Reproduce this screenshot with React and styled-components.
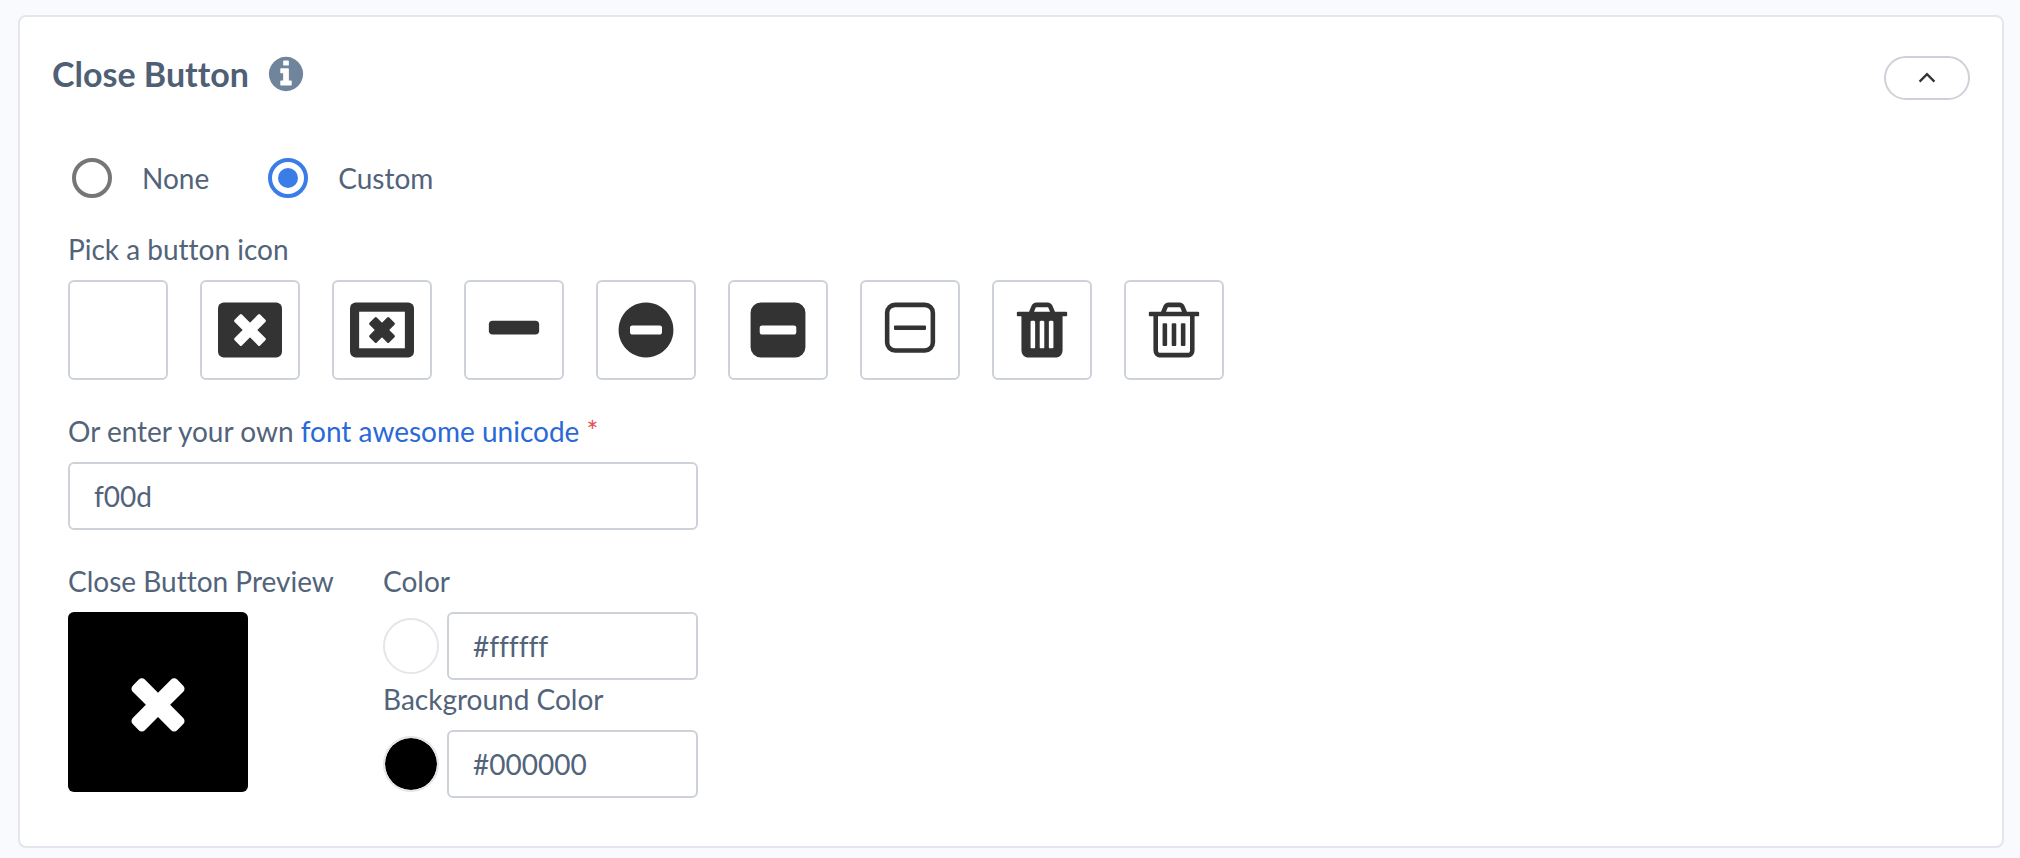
import { useState } from 'react';
import styled, { createGlobalStyle } from 'styled-components';

const GlobalStyle = createGlobalStyle`
	* {
		box-sizing: border-box;
	}
	body {
		margin: 0;
		background: #f8fafe;
		color: #52637a;
		font-family: Lato, 'Liberation Sans', sans-serif;
		font-size: 28px;
		line-height: 38px;
		font-variant-ligatures: none;
	}
`;

const Card = styled.section`
	margin: 15px 16px 10px 18px;
	padding: 39px 32px 48px 32px;
	background: #fff;
	border: 2px solid #e3e6ec;
	border-radius: 8px;
`;

const Header = styled.header`
	display: flex;
	justify-content: space-between;
	align-items: flex-start;
`;

const Heading = styled.div`
	display: flex;
	align-items: center;
	gap: 20px;
`;

const Title = styled.h2`
	margin: 0;
	color: #4f6075;
	font-size: 34px;
	line-height: 36px;
	font-weight: 700;
`;

const IconButton = styled.button`
	display: flex;
	align-items: center;
	justify-content: center;
	padding: 0;
	border: 2px solid #cdd2da;
	background: #fff;
	color: #333;
	cursor: pointer;
`;

const InfoButton = styled(IconButton)`
	width: 34px;
	height: 34px;
	border: none;
	color: #70859b;
`;

const CollapseButton = styled(IconButton)`
	width: 86px;
	height: 44px;
	border-radius: 22px;
`;

const Body = styled.div`
	display: flex;
	flex-direction: column;
	gap: 32px;
	padding: 58px 16px 0;
`;

const Options = styled.div`
	display: flex;
	gap: 59px;
	padding-left: 4px;
`;

const Option = styled.label`
	display: flex;
	align-items: center;
	gap: 30px;
	height: 40px;
`;

const Radio = styled.input`
	appearance: none;
	display: grid;
	place-items: center;
	width: 40px;
	height: 40px;
	margin: 0;
	border: 4px solid #767676;
	border-radius: 50%;

	&:checked {
		border-color: #3a7de8;
	}
	&:checked::before {
		content: '';
		width: 20px;
		height: 20px;
		border-radius: 50%;
		background: #3a7de8;
	}
`;

const Field = styled.div`
	max-width: ${({ $wide }) => ($wide ? 'none' : '630px')};
`;

const Label = styled.label`
	display: block;
	margin-bottom: 12px;
	white-space: nowrap;
`;

const IconRow = styled.div`
	display: flex;
	flex-wrap: wrap;
	gap: 32px;
`;

const IconChoice = styled(IconButton)`
	width: 100px;
	height: 100px;
	border-radius: 6px;
	color: ${({ $active }) => ($active ? '#fff' : '#333')};
`;

const Link = styled.a`
	color: #2a69d8;
	text-decoration: none;
`;

const Required = styled.span`
	color: #e0524d;
`;

const TextInput = styled.input`
	width: 100%;
	min-width: 0;
	height: 68px;
	padding: 0 24px;
	border: 2px solid #cdd2da;
	border-radius: 6px;
	background: #fff;
	color: inherit;
	font: inherit;
	font-variant-ligatures: none;
`;

const Columns = styled.div`
	display: grid;
	grid-template-columns: 1fr 1fr;
	max-width: 630px;
`;

const Preview = styled.div`
	display: flex;
	align-items: center;
	justify-content: center;
	width: 180px;
	height: 180px;
	border-radius: 6px;
	background: ${({ $background }) => $background};
	color: ${({ $color }) => $color};
`;

const ColorRow = styled.div`
	display: flex;
	align-items: center;
	gap: 8px;
`;

const Swatch = styled.input`
	appearance: none;
	flex: none;
	width: 56px;
	height: 56px;
	padding: 0;
	border: 2px solid #e5e5ea;
	border-radius: 50%;
	background: none;
	overflow: hidden;

	&::-webkit-color-swatch-wrapper {
		padding: 0;
	}
	&::-webkit-color-swatch {
		border: none;
		border-radius: 50%;
	}
`;

const Svg = styled.svg`
	display: block;
	flex: none;
	fill: currentColor;
`;

const circle =
	'm320-64q0 209-103 385.5t-279.5 279.5-385.5 103-385.5-103-279.5-279.5-103-385.5 103-385.5 279.5-279.5 385.5-103 385.5 103 279.5 279.5 103 385.5z';
const trashLid =
	'h448l-48-117q-7-9-17-11h-317q-10 2-17 11zm928 32v64q0 14-9 23t-23 9h-96v948q0 83-47 143.5t-113 60.5h-832q-66 0-113-58.5t-47-141.5v-952h-96q-14 0-23-9t-9-23v-64q0-14 9-23t23-9h309l70-167q15-37 54-63t79-26h320q40 0 79 26t54 63l70 167h309q14 0 23 9t9 23z';
const slot = 'v576q0 14-9 23t-23 9h-64q-14 0-23-9t-9-23v-576q0-14 9-23t23-9h64q14 0 23 9t9 23z';
const longSlot = 'v-704q0-14-9-23t-23-9h-64q-14 0-23 9t-9 23v704q0 14 9 23t23 9h64q14 0 23-9t9-23z';

const paths = {
	times:
		'M1490 1322q0 40-28 68l-136 136q-28 28-68 28t-68-28l-294-294-294 294q-28 28-68 28t-68-28l-136-136q-28-28-28-68t28-68l294-294-294-294q-28-28-28-68t28-68l136-136q28-28 68-28t68 28l294 294 294-294q28-28 68-28t68 28l136 136q28 28 28 68t-28 68l-294 294 294 294q28 28 28 68z',
	minus:
		'M1600 736v192q0 40-28 68t-68 28h-1216q-40 0-68-28t-28-68v-192q0-40 28-68t68-28h1216q40 0 68 28t28 68z',
	minusCircle: `M1344 960v-128q0-26-19-45t-45-19h-768q-26 0-45 19t-19 45v128q0 26 19 45t45 19h768q26 0 45-19t19-45z${circle}`,
	minusSquare:
		'M1408 960v-128q0-26-19-45t-45-19h-896q-26 0-45 19t-19 45v128q0 26 19 45t45 19h896q26 0 45-19t19-45zm256-544v960q0 119-84.5 203.5t-203.5 84.5h-960q-119 0-203.5-84.5t-84.5-203.5v-960q0-119 84.5-203.5t203.5-84.5h960q119 0 203.5 84.5t84.5 203.5z',
	minusSquareOutline:
		'M1344 800v64q0 14-9 23t-23 9h-832q-14 0-23-9t-9-23v-64q0-14 9-23t23-9h832q14 0 23 9t9 23zm128 448v-832q0-66-47-113t-113-47h-832q-66 0-113 47t-47 113v832q0 66 47 113t113 47h832q66 0 113-47t47-113zm128-832v832q0 119-84.5 203.5t-203.5 84.5h-832q-119 0-203.5-84.5t-84.5-203.5v-832q0-119 84.5-203.5t203.5-84.5h832q119 0 203.5 84.5t84.5 203.5z',
	trash: `M704 1376${longSlot}m256 0${longSlot}m256 0${longSlot}m-544-992${trashLid}`,
	trashOutline: `M704 736${slot}m256 0${slot}m256 0${slot}m128 724v-948h-896v948q0 22 7 40.5t14.5 27 10.5 8.5h832q3 0 10.5-8.5t14.5-27 7-40.5zm-672-1076${trashLid}`,
	info: 'M1152 1376v-160q0-14-9-23t-23-9h-96v-512q0-14-9-23t-23-9h-320q-14 0-23 9t-9 23v160q0 14 9 23t23 9h96v320h-96q-14 0-23 9t-9 23v160q0 14 9 23t23 9h448q14 0 23-9t9-23zm-128-896v-160q0-14-9-23t-23-9h-192q-14 0-23 9t-9 23v160q0 14 9 23t23 9h192q14 0 23-9t9-23zm640 416q0 209-103 385.5t-279.5 279.5-385.5 103-385.5-103-279.5-279.5-103-385.5 103-385.5 279.5-279.5 385.5-103 385.5 103 279.5 279.5 103 385.5z',
};

function Cross({ length, fill }) {
	const bar = { x: 896 - length / 2, y: 752, width: length, height: 288, rx: 40, fill };
	return (
		<>
			<rect {...bar} transform="rotate(45 896 896)" />
			<rect {...bar} transform="rotate(-45 896 896)" />
		</>
	);
}

function Icon({ name, size = 64 }) {
	return (
		<Svg width={size} height={size} viewBox="0 0 1792 1792" aria-hidden="true">
			{name === 'windowClose' && (
				<>
					<rect y="128" width="1792" height="1536" rx="160" />
					<Cross length={1010} fill="#fff" />
				</>
			)}
			{name === 'windowCloseOutline' && (
				<>
					<rect y="128" width="1792" height="1536" rx="160" />
					<rect x="256" y="384" width="1280" height="1024" fill="#fff" />
					<Cross length={780} />
				</>
			)}
			{paths[name] && <path d={paths[name]} />}
		</Svg>
	);
}

const choices = [
	{ name: 'times', code: 'f00d' },
	{ name: 'windowClose', code: 'f2d3' },
	{ name: 'windowCloseOutline', code: 'f2d4' },
	{ name: 'minus', code: 'f068' },
	{ name: 'minusCircle', code: 'f056' },
	{ name: 'minusSquare', code: 'f146' },
	{ name: 'minusSquareOutline', code: 'f147' },
	{ name: 'trash', code: 'f1f8' },
	{ name: 'trashOutline', code: 'f014' },
];

export default function App() {
	const [mode, setMode] = useState('custom');
	const [code, setCode] = useState('f00d');
	const [color, setColor] = useState('#ffffff');
	const [background, setBackground] = useState('#000000');
	const [open, setOpen] = useState(true);
	const selected = choices.find((choice) => choice.code === code);

	return (
		<>
			<GlobalStyle />
			<Card>
				<Header>
					<Heading>
						<Title>Close Button</Title>
						<InfoButton type="button" aria-label="About the close button">
							<Icon name="info" size={40} />
						</InfoButton>
					</Heading>
					<CollapseButton type="button" aria-label="Toggle section" aria-expanded={open} onClick={() => setOpen(!open)}>
						<svg width="18" height="12" viewBox="0 0 18 12" fill="none" stroke="currentColor" strokeWidth="2.3">
							<path d="M1.6 9.6 9 2.2l7.4 7.4" />
						</svg>
					</CollapseButton>
				</Header>
				{open && (
					<Body>
						<Options>
							<Option>
								<Radio type="radio" name="mode" checked={mode === 'none'} onChange={() => setMode('none')} />
								None
							</Option>
							<Option>
								<Radio type="radio" name="mode" checked={mode === 'custom'} onChange={() => setMode('custom')} />
								Custom
							</Option>
						</Options>
						<Field $wide>
							<Label as="div" id="icon-label">Pick a button icon</Label>
							<IconRow role="group" aria-labelledby="icon-label">
								{choices.map((choice) => (
									<IconChoice
										key={choice.name}
										type="button"
										aria-label={choice.name}
										$active={choice.code === code}
										onClick={() => setCode(choice.code)}
									>
										<Icon name={choice.name} />
									</IconChoice>
								))}
							</IconRow>
						</Field>
						<Field>
							<Label htmlFor="unicode">
								Or enter your own <Link href="#icons">font awesome unicode</Link> <Required>*</Required>
							</Label>
							<TextInput id="unicode" value={code} onChange={(e) => setCode(e.target.value)} />
						</Field>
						<Columns>
							<div>
								<Label as="div">Close Button Preview</Label>
								<Preview $color={color} $background={background}>
									{selected && <Icon name={selected.name} size={80} />}
								</Preview>
							</div>
							<div>
								<Label htmlFor="color">Color</Label>
								<ColorRow>
									<Swatch type="color" aria-label="Pick color" value={color} onChange={(e) => setColor(e.target.value)} />
									<TextInput id="color" value={color} onChange={(e) => setColor(e.target.value)} />
								</ColorRow>
								<Label htmlFor="background">Background Color</Label>
								<ColorRow>
									<Swatch type="color" aria-label="Pick background color" value={background} onChange={(e) => setBackground(e.target.value)} />
									<TextInput id="background" value={background} onChange={(e) => setBackground(e.target.value)} />
								</ColorRow>
							</div>
						</Columns>
					</Body>
				)}
			</Card>
		</>
	);
}
